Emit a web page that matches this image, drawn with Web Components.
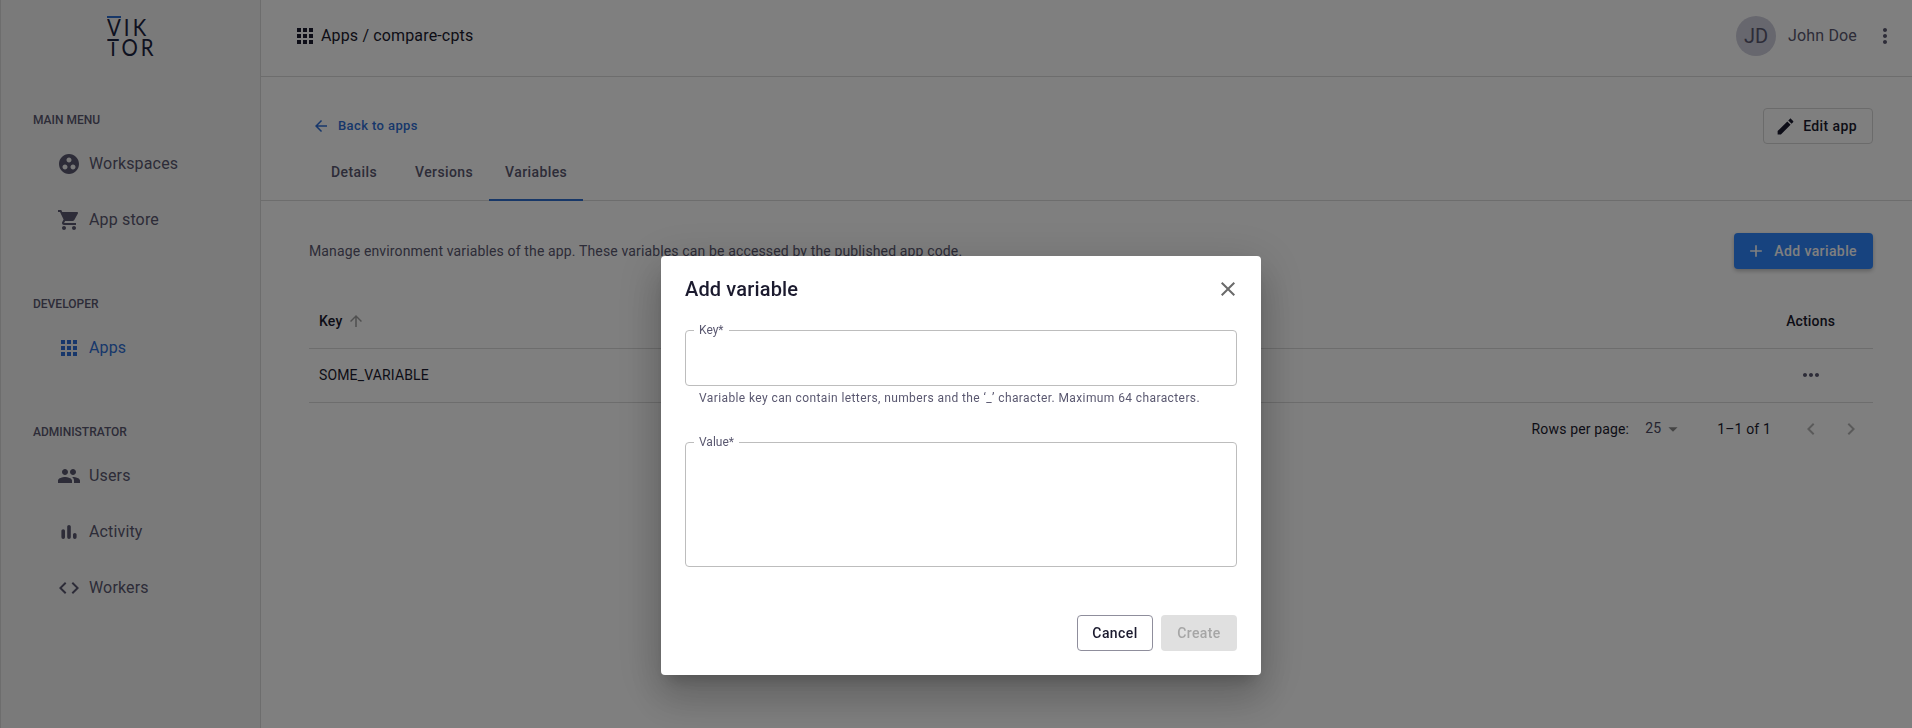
<!DOCTYPE html>
<html>
<head>
<meta charset="utf-8">
<title>Apps / compare-cpts</title>
<style>
    html, body { margin: 0; height: 100%; overflow: hidden; }
    body { font-family: Roboto, "Liberation Sans", sans-serif; color: #1b1a2e; background: #fff; }
</style>
</head>
<body>
<vk-shell>
    <vk-sidebar slot="side"></vk-sidebar>
    <vk-topbar slot="top"></vk-topbar>
    <vk-app-page slot="main"></vk-app-page>
</vk-shell>
<vk-dialog heading="Add variable">
    <vk-field label="Key*" height="62" helper="Variable key can contain letters, numbers and the ‘_’ character. Maximum 64 characters."></vk-field>
    <vk-field label="Value*" height="131"></vk-field>
</vk-dialog>

<script>
const ICONS = {
    workspaces: "M12 2C6.48 2 2 6.48 2 12s4.48 10 10 10 10-4.48 10-10S17.52 2 12 2zM8 17.5c-1.38 0-2.5-1.12-2.5-2.5s1.12-2.5 2.5-2.5 2.5 1.12 2.5 2.5-1.12 2.5-2.5 2.5zM9.5 8c0-1.38 1.12-2.5 2.5-2.5s2.5 1.12 2.5 2.5-1.12 2.5-2.5 2.5S9.5 9.38 9.5 8zm6.5 9.5c-1.38 0-2.5-1.12-2.5-2.5s1.12-2.5 2.5-2.5 2.5 1.12 2.5 2.5-1.12 2.5-2.5 2.5z",
    cart: "M7 18c-1.1 0-1.99.9-1.99 2S5.9 22 7 22s2-.9 2-2-.9-2-2-2zM1 2v2h2l3.6 7.59-1.35 2.45c-.16.28-.25.61-.25.96 0 1.1.9 2 2 2h12v-2H7.42c-.14 0-.25-.11-.25-.25l.03-.12.9-1.63h7.45c.75 0 1.41-.41 1.75-1.03l3.58-6.49c.08-.14.12-.31.12-.48 0-.55-.45-1-1-1H5.21l-.94-2H1zm16 16c-1.1 0-1.99.9-1.99 2s.89 2 1.99 2 2-.9 2-2-.9-2-2-2z",
    apps: "M4 8h4V4H4v4zm6 12h4v-4h-4v4zm-6 0h4v-4H4v4zm0-6h4v-4H4v4zm6 0h4v-4h-4v4zm6-10v4h4V4h-4zm-6 4h4V4h-4v4zm6 6h4v-4h-4v4zm0 6h4v-4h-4v4z",
    people: "M16 11c1.66 0 2.99-1.34 2.99-3S17.66 5 16 5c-1.66 0-3 1.34-3 3s1.34 3 3 3zm-8 0c1.66 0 2.99-1.34 2.99-3S9.66 5 8 5C6.34 5 5 6.34 5 8s1.34 3 3 3zm0 2c-2.33 0-7 1.17-7 3.5V19h14v-2.5c0-2.33-4.67-3.5-7-3.5zm8 0c-.29 0-.62.02-.97.05 1.16.84 1.97 1.97 1.97 3.45V19h6v-2.5c0-2.33-4.67-3.5-7-3.5z",
    bars: "M6.2 9.2C7.2 9.2 8 10 8 11v6.2a1.8 1.8 0 0 1-3.6 0V11c0-1 .8-1.8 1.8-1.8zM12 5c1 0 1.8.8 1.8 1.8v10.4a1.8 1.8 0 0 1-3.6 0V6.8C10.2 5.8 11 5 12 5zm5.8 8c1 0 1.8.8 1.8 1.8v2.4a1.8 1.8 0 0 1-3.6 0v-2.4c0-1 .8-1.8 1.8-1.8z",
    code: "M9.4 16.6 4.8 12l4.6-4.6L8 6l-6 6 6 6 1.4-1.4zm5.2 0 4.6-4.6-4.6-4.6L16 6l6 6-6 6-1.4-1.4z",
    edit: "M3 17.25V21h3.75L17.81 9.94l-3.75-3.75L3 17.25zM20.71 7.04c.39-.39.39-1.02 0-1.41l-2.34-2.34c-.39-.39-1.02-.39-1.41 0l-1.83 1.83 3.75 3.75 1.83-1.83z",
    back: "M20 11H7.83l5.59-5.59L12 4l-8 8 8 8 1.41-1.41L7.83 13H20v-2z",
    up: "M4 12l1.41 1.41L11 7.83V20h2V7.83l5.58 5.59L20 12l-8-8-8 8z",
    close: "M19 6.41 17.59 5 12 10.59 6.41 5 5 6.41 10.59 12 5 17.59 6.41 19 12 13.41 17.59 19 19 17.59 13.41 12z",
    vert: "M12 8c1.1 0 2-.9 2-2s-.9-2-2-2-2 .9-2 2 .9 2 2 2zm0 2c-1.1 0-2 .9-2 2s.9 2 2 2 2-.9 2-2-.9-2-2-2zm0 6c-1.1 0-2 .9-2 2s.9 2 2 2 2-.9 2-2-.9-2-2-2z",
    horiz: "M6 10c-1.1 0-2 .9-2 2s.9 2 2 2 2-.9 2-2-.9-2-2-2zm12 0c-1.1 0-2 .9-2 2s.9 2 2 2 2-.9 2-2-.9-2-2-2zm-6 0c-1.1 0-2 .9-2 2s.9 2 2 2 2-.9 2-2-.9-2-2-2z",
    left: "M15.41 7.41 14 6l-6 6 6 6 1.41-1.41L10.83 12z",
    right: "M10 6 8.59 7.41 13.17 12l-4.58 4.59L10 18l6-6z",
    caret: "M7 10l5 5 5-5z",
    add: "M19 13h-6v6h-2v-6H5v-2h6V5h2v6h6v2z"
};

function icon(name, size = 24, fill = "currentColor") {
    return `<svg width="${size}" height="${size}" viewBox="0 0 24 24" fill="${fill}" style="display:block;flex:none"><path d="${ICONS[name]}"/></svg>`;
}

class VkShell extends HTMLElement {
    constructor() {
        super();
        this.shadowDOM = this.attachShadow({mode: "open"});
        this.shadowDOM.innerHTML = `
            <style>
                :host { display: grid; grid-template-columns: 261px 1fr; grid-template-rows: 77px 1fr; height: 728px; }
                .side { grid-row: 1 / 3; display: block; }
            </style>
            <div class="side"><slot name="side"></slot></div>
            <div><slot name="top"></slot></div>
            <div><slot name="main"></slot></div>
        `;
    }
}

class VkSidebar extends HTMLElement {
    constructor() {
        super();
        this.shadowDOM = this.attachShadow({mode: "open"});
        this.shadowDOM.innerHTML = `
            <style>
                :host {
                    display: block;
                    box-sizing: border-box;
                    height: 728px;
                    padding-top: 16px;
                    background: #f5f5f5;
                    border-left: 1px solid #dadada;
                    border-right: 1px solid #dadada;
                    color: #5a5870;
                }
                .logo {
                    position: relative;
                    width: 60px;
                    height: 40px;
                    margin-left: 106px;
                }
                .logo span {
                    display: block;
                    padding-top: 1px;
                    font: 400 24px/20px Lato, Roboto, sans-serif;
                    letter-spacing: 3.6px;
                    color: #1b2340;
                    transform: scaleX(.85);
                    transform-origin: 0 0;
                }
                .logo::before {
                    content: "";
                    position: absolute;
                    left: 0;
                    top: 0;
                    width: 14px;
                    height: 2px;
                    background: #2e6fd0;
                }
                .logo::after {
                    content: "";
                    position: absolute;
                    left: 0;
                    top: 25px;
                    width: 14px;
                    height: 1px;
                    background: #f5f5f5;
                }
                h4 {
                    margin: 0;
                    padding-left: 32px;
                    font: 500 12px/16px Roboto, sans-serif;
                    color: #5a5870;
                }
                .main { margin-top: 56px; }
                .group + .group { margin-top: 48px; }
                .group h4 + * { margin-top: 8px; }
            </style>
            <div class="logo"><span>VIK TOR</span></div>
            <div class="main">
                <div class="group">
                    <h4>MAIN MENU</h4>
                    <vk-nav-item icon="workspaces">Workspaces</vk-nav-item>
                    <vk-nav-item icon="cart">App store</vk-nav-item>
                </div>
                <div class="group">
                    <h4>DEVELOPER</h4>
                    <vk-nav-item icon="apps" active>Apps</vk-nav-item>
                </div>
                <div class="group">
                    <h4>ADMINISTRATOR</h4>
                    <vk-nav-item icon="people">Users</vk-nav-item>
                    <vk-nav-item icon="bars">Activity</vk-nav-item>
                    <vk-nav-item icon="code">Workers</vk-nav-item>
                </div>
            </div>
        `;
    }
}

class VkNavItem extends HTMLElement {
    constructor() {
        super();
        this.shadowDOM = this.attachShadow({mode: "open"});
    }

    connectedCallback() {
        this.shadowDOM.innerHTML = `
            <style>
                :host {
                    display: flex;
                    align-items: center;
                    gap: 8px;
                    height: 56px;
                    padding-left: 56px;
                    font: 400 16px/24px Roboto, sans-serif;
                    letter-spacing: .15px;
                    color: #5a5870;
                }
                :host([active]) { color: #2f6fd6; }
            </style>
            ${icon(this.getAttribute("icon"))}
            <span><slot></slot></span>
        `;
    }
}

class VkTopbar extends HTMLElement {
    constructor() {
        super();
        this.shadowDOM = this.attachShadow({mode: "open"});
        this.shadowDOM.innerHTML = `
            <style>
                :host {
                    display: flex;
                    align-items: center;
                    box-sizing: border-box;
                    height: 77px;
                    padding: 0 15px 5px 32px;
                    border-bottom: 1px solid #dadada;
                    font: 400 16px/24px Roboto, sans-serif;
                    letter-spacing: .15px;
                }
                .crumb { display: flex; align-items: center; gap: 4px; color: #1b1a2e; }
                .user { margin-left: auto; display: flex; align-items: center; color: #5a5870; }
                .avatar {
                    width: 40px;
                    height: 40px;
                    border-radius: 50%;
                    background: #cfcfdc;
                    display: flex;
                    align-items: center;
                    justify-content: center;
                    font-size: 20px;
                    letter-spacing: 0;
                    margin-right: 12px;
                }
                .name { margin-right: 16px; }
            </style>
            <div class="crumb">${icon("apps")}<span>Apps / compare-cpts</span></div>
            <div class="user">
                <div class="avatar">JD</div>
                <div class="name">John Doe</div>
                ${icon("vert")}
            </div>
        `;
    }
}

class VkButton extends HTMLElement {
    constructor() {
        super();
        this.shadowDOM = this.attachShadow({mode: "open"});
    }

    connectedCallback() {
        const name = this.getAttribute("icon");
        this.shadowDOM.innerHTML = `
            <style>
                :host {
                    display: inline-flex;
                    align-items: center;
                    box-sizing: border-box;
                    height: 36px;
                    padding: 0 16px;
                    border-radius: 4px;
                    font: 500 14px/20px Roboto, sans-serif;
                    letter-spacing: .4px;
                    white-space: nowrap;
                }
                :host([kind="outline"]) { border: 1px solid #8f8e9c; color: #1b1a2e; background: #fff; }
                :host([kind="ghost"]) { border: 1px solid #d6d6d6; color: #1b1a2e; padding: 0 15px 0 11px; }
                :host([kind="ghost"]) svg { margin-right: 7px; }
                :host([kind="primary"]) {
                    background: #2e86fe;
                    color: #fff;
                    box-shadow: 0 2px 4px rgba(0,0,0,.25);
                    padding: 0 16px 0 12px;
                }
                :host([kind="primary"]) svg { margin-right: 8px; }
                :host([kind="disabled"]) { background: #e0e0e0; color: #a6a6a6; }
            </style>
            ${name ? icon(name, this.getAttribute("icon-size") || 20) : ""}
            <slot></slot>
        `;
    }
}

class VkTabs extends HTMLElement {
    constructor() {
        super();
        this.shadowDOM = this.attachShadow({mode: "open"});
        this.shadowDOM.innerHTML = `
            <style>
                :host {
                    display: flex;
                    box-sizing: border-box;
                    height: 53px;
                    padding-left: 48px;
                    border-bottom: 1px solid #dadada;
                    font: 500 14px/20px Roboto, sans-serif;
                    letter-spacing: .4px;
                    color: #5a5870;
                }
                .tab {
                    box-sizing: border-box;
                    min-width: 90px;
                    padding: 14px 16px 0;
                    text-align: center;
                }
                .tab.on { border-bottom: 2px solid #2e6fd0; margin-bottom: -1px; }
            </style>
            <div class="tab">Details</div>
            <div class="tab">Versions</div>
            <div class="tab on">Variables</div>
        `;
    }
}

class VkTable extends HTMLElement {
    constructor() {
        super();
        this.shadowDOM = this.attachShadow({mode: "open"});
        this.shadowDOM.innerHTML = `
            <style>
                :host { display: block; font: 400 14px/20px Roboto, sans-serif; letter-spacing: .15px; color: #1b1a2e; }
                .row {
                    display: flex;
                    align-items: center;
                    justify-content: space-between;
                    box-sizing: border-box;
                    height: 54px;
                    padding: 0 38px 1px 10px;
                    border-bottom: 1px solid #dadada;
                }
                .head { font-weight: 500; }
                .key { display: flex; align-items: center; gap: 5px; }
                .up { color: #a0a0a0; }
                .dots { color: #5a5870; width: 48px; display: flex; justify-content: center; }
                .foot {
                    display: flex;
                    align-items: center;
                    height: 52px;
                    justify-content: flex-end;
                    padding-right: 10px;
                }
                .size { display: flex; align-items: center; margin: 0 33px 0 16px; color: #4a4860; }
                .size b { font-weight: 400; position: relative; top: -1px; }
                .foot .size svg { margin-left: 1px; color: #8a8a8a; }
                .pager { display: flex; gap: 16px; color: #b5b5b5; margin-left: 28px; }
            </style>
            <div class="row head">
                <div class="key">Key <span class="up">${icon("up", 18)}</span></div>
                <div>Actions</div>
            </div>
            <div class="row">
                <div>SOME_VARIABLE</div>
                <div class="dots">${icon("horiz", 24)}</div>
            </div>
            <div class="foot">
                <span>Rows per page:</span>
                <span class="size"><b>25</b>${icon("caret", 22)}</span>
                <span>1–1 of 1</span>
                <span class="pager">${icon("left")}${icon("right")}</span>
            </div>
        `;
    }
}

class VkAppPage extends HTMLElement {
    constructor() {
        super();
        this.shadowDOM = this.attachShadow({mode: "open"});
        this.shadowDOM.innerHTML = `
            <style>
                :host { display: block; }
                .top {
                    display: flex;
                    align-items: center;
                    justify-content: space-between;
                    box-sizing: border-box;
                    height: 71px;
                    padding: 31px 39px 4px 48px;
                }
                .back {
                    display: flex;
                    align-items: center;
                    gap: 8px;
                    padding-left: 3px;
                    color: #2f6fd6;
                    font: 500 13px/16px Roboto, sans-serif;
                    letter-spacing: .4px;
                }
                .body { padding: 32px 39px 0 48px; }
                .intro {
                    display: flex;
                    align-items: center;
                    justify-content: space-between;
                    font: 400 14px/20px Roboto, sans-serif;
                    letter-spacing: .14px;
                    color: #5a5870;
                    margin-bottom: 26px;
                }
            </style>
            <div class="top">
                <div class="back">${icon("back", 18)}<span>Back to apps</span></div>
                <vk-button kind="ghost" icon="edit" icon-size="21">Edit app</vk-button>
            </div>
            <vk-tabs></vk-tabs>
            <div class="body">
                <div class="intro">
                    <span>Manage environment variables of the app. These variables can be accessed by the published app code.</span>
                    <vk-button kind="primary" icon="add" icon-size="20">Add variable</vk-button>
                </div>
                <vk-table></vk-table>
            </div>
        `;
    }
}

class VkField extends HTMLElement {
    constructor() {
        super();
        this.shadowDOM = this.attachShadow({mode: "open"});
    }

    connectedCallback() {
        const helper = this.getAttribute("helper");
        this.shadowDOM.innerHTML = `
            <style>
                :host { display: block; }
                fieldset {
                    box-sizing: border-box;
                    height: ${this.getAttribute("height")}px;
                    margin: 0;
                    padding: 0 8px;
                    border: 1px solid #bdbdbd;
                    border-radius: 4px;
                }
                legend {
                    padding: 0 5px;
                    margin-top: 0;
                    font: 400 12px/12px Roboto, sans-serif;
                    letter-spacing: 0;
                    color: #5a5870;
                }
                p {
                    margin: 4px 14px 0;
                    font: 400 12px/16px Roboto, sans-serif;
                    letter-spacing: .4px;
                    color: #5a5870;
                }
            </style>
            <fieldset><legend>${this.getAttribute("label")}</legend></fieldset>
            ${helper ? `<p>${helper}</p>` : ""}
        `;
    }
}

class VkDialog extends HTMLElement {
    constructor() {
        super();
        this.shadowDOM = this.attachShadow({mode: "open"});
    }

    connectedCallback() {
        this.shadowDOM.innerHTML = `
            <style>
                :host {
                    position: fixed;
                    inset: 0;
                    display: flex;
                    justify-content: center;
                    align-items: flex-start;
                    padding-left: 10px;
                    background: rgba(0, 0, 0, .5);
                }
                .paper {
                    box-sizing: border-box;
                    width: 600px;
                    height: 419px;
                    margin-top: 256px;
                    padding: 20px 24px 0;
                    background: #fff;
                    border-radius: 4px;
                    box-shadow: 0 11px 15px -7px rgba(0,0,0,.2), 0 24px 38px 3px rgba(0,0,0,.14), 0 9px 46px 8px rgba(0,0,0,.12);
                }
                header {
                    display: flex;
                    align-items: center;
                    justify-content: space-between;
                    height: 26px;
                    margin-bottom: 22px;
                }
                h2 { margin: 0; font: 500 20px/26px Roboto, sans-serif; letter-spacing: .15px; color: #1b1a2e; }
                .close { color: #6a6a6a; margin-right: -3px; }
                .fields { display: flex; flex-direction: column; gap: 30px; }
                footer { display: flex; justify-content: flex-end; gap: 8px; margin-top: 48px; }
                footer vk-button { width: 76px; justify-content: center; padding: 0; }
            </style>
            <div class="paper">
                <header><h2>${this.getAttribute("heading")}</h2><span class="close">${icon("close")}</span></header>
                <div class="fields"><slot></slot></div>
                <footer>
                    <vk-button kind="outline">Cancel</vk-button>
                    <vk-button kind="disabled">Create</vk-button>
                </footer>
            </div>
        `;
    }
}

customElements.define("vk-shell", VkShell);
customElements.define("vk-sidebar", VkSidebar);
customElements.define("vk-nav-item", VkNavItem);
customElements.define("vk-topbar", VkTopbar);
customElements.define("vk-button", VkButton);
customElements.define("vk-tabs", VkTabs);
customElements.define("vk-table", VkTable);
customElements.define("vk-app-page", VkAppPage);
customElements.define("vk-field", VkField);
customElements.define("vk-dialog", VkDialog);
</script>
</body>
</html>
